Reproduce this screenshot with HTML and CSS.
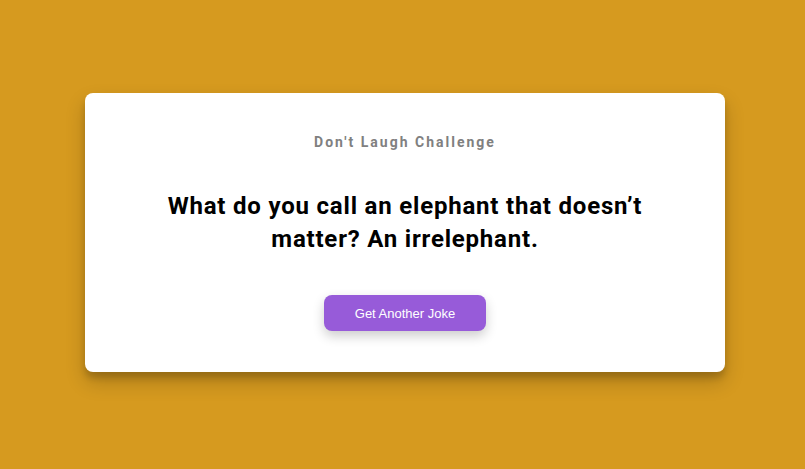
FILE: index.html
```html
<!DOCTYPE html>
<html lang="en">
<head>
<meta charset="UTF-8">
<title>Don't Laugh Challenge</title>
<link rel="stylesheet" href="styles.css">
</head>
<body>
<main class="page">
  <section class="card">
    <h3 class="title">Don't Laugh Challenge</h3>
    <p class="joke">What do you call an elephant that doesn’t matter? An irrelephant.</p>
    <button class="btn" type="button">Get Another Joke</button>
  </section>
</main>
</body>
</html>
```
FILE: styles.css
```css
* { box-sizing: border-box; }
html, body { margin: 0; padding: 0; }
body {
  background: #d69a1f;
  font-family: Roboto, "Liberation Sans", sans-serif;
}
.page {
  min-height: 100vh;
  display: flex;
  align-items: center;
  justify-content: center;
  padding-left: 5px;
  padding-bottom: 4px;
}
.card {
  width: 640px;
  background: #fff;
  border-radius: 8px;
  box-shadow: 0 10px 20px rgba(0, 0, 0, 0.2), 0 6px 6px rgba(0, 0, 0, 0.15);
  padding: 39px 50px 41px;
  text-align: center;
}
.title {
  margin: 0;
  font-size: 14px;
  font-weight: 700;
  letter-spacing: 2px;
  color: #808080;
  line-height: 20px;
}
.joke {
  margin: 38px 0 39px;
  font-size: 24px;
  font-weight: 700;
  line-height: 33px;
  color: #000;
  letter-spacing: 0.8px;
}
.btn {
  border: 0;
  border-radius: 8px;
  background: #975bd9;
  color: #fff;
  font-family: "Liberation Sans", Arial, sans-serif;
  font-size: 13px;
  padding: 0 31px;
  height: 36px;
  box-shadow: 0 5px 12px rgba(0, 0, 0, 0.2);
  cursor: pointer;
}
```
